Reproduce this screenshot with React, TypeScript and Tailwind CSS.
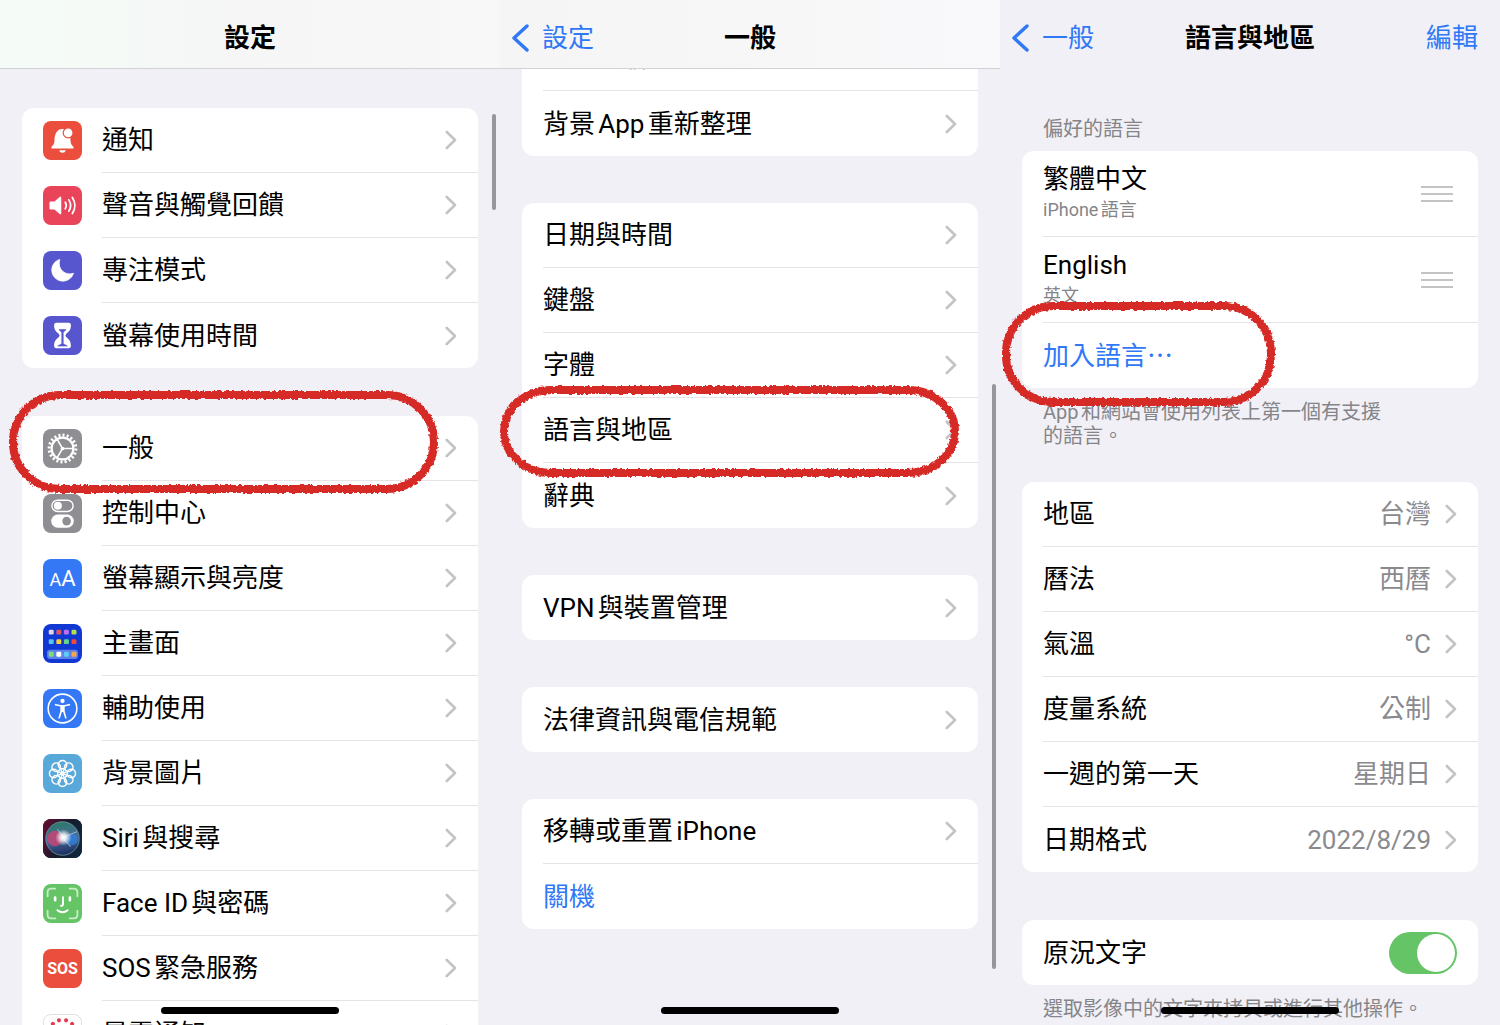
import { useState, ReactNode } from 'react'
import clsx from 'clsx'

interface RowItem {
  title: string
  icon?: ReactNode
  value?: string
  action?: boolean
  ring?: string
}

function Tile({ color, children }: { color: string; children?: ReactNode }) {
  return (
    <svg className={clsx('size-[39px] shrink-0 rounded-lg', color)} viewBox="0 0 38 38" fill="none" stroke="none">
      {children}
    </svg>
  )
}

function TextTile({ color, children }: { color: string; children: ReactNode }) {
  return (
    <span className={clsx('flex size-[39px] shrink-0 items-baseline justify-center rounded-lg text-white', color)}>
      {children}
    </span>
  )
}

const bell = (
  <Tile color="bg-[#eb4e3d]">
    <path d="M9 26.800q-1.300 0-.8-1.300c.4-1 3-2.500 3-6.500 0-6.500 2.500-11.200 7.800-11.200s7.800 4.700 7.800 11.200c0 4 2.600 5.500 3 6.500q.5 1.300-.8 1.300z" fill="#fff" />
    <path d="M15.700 28.500h6.600q-.8 2.500-3.300 2.500t-3.300-2.500z" fill="#fff" />
    <circle cx="24.5" cy="11.6" r="5.4" fill="#eb4e3d" />
    <circle cx="24.5" cy="11.6" r="4.2" fill="#fff" />
  </Tile>
)

const speaker = (
  <Tile color="bg-[#ea445a]">
    <path d="M7.500 15h3.700l5-4.200q1.600-1.200 1.600.8v14.800q0 2-1.600.8l-5-4.200H7.500q-1.200 0-1.200-1.200v-5.600q0-1.200 1.200-1.200z" fill="#fff" />
    <path d="M21.700 15.800q1.900 3.200 0 6.400M25.200 13.500q3.400 5.500 0 11M28.600 11.200q5 7.800 0 15.600" stroke="#fff" strokeWidth="1.7" strokeLinecap="round" />
  </Tile>
)

const moon = (
  <Tile color="bg-[#5756ce]">
    <path d="M16.300 8.200A10.800 10.800 0 1 0 29.700 21.700C22 24.500 13.500 18 16.300 8.200z" fill="#fff" stroke="#fff" strokeWidth=".8" strokeLinejoin="round" />
  </Tile>
)

const hourglass = (
  <Tile color="bg-[#5756ce]">
    <path d="M13 6.600h12q2.200 0 2.200 2.200c0 5-2 6.500-4.700 8.700q-1.300 1.500 0 3c2.700 2.200 4.700 3.700 4.700 8.700q0 2.200-2.200 2.200H13q-2.200 0-2.200-2.200c0-5 2-6.500 4.700-8.700q1.300-1.500 0-3c-2.700-2.200-4.700-3.700-4.700-8.700q0-2.200 2.200-2.200z" fill="#fff" />
    <path d="M15.500 13.200h7L19.700 16v11l4 2.300h-9.400l4-2.300V16z" fill="#5756ce" stroke="#5756ce" strokeWidth=".6" strokeLinejoin="round" />
  </Tile>
)

const gear = (
  <Tile color="bg-[#8e8e93]">
    <g stroke="#fff">
      <circle cx="19" cy="19" r="13" strokeWidth="3" pathLength="40" strokeDasharray="1 1" />
      <circle cx="19" cy="19" r="10.6" strokeWidth="2.2" />
      <path d="M19 19h10.500M19 19l-5.300-9.200M19 19l-5.300 9.200" strokeWidth="1.5" />
    </g>
    <circle cx="19" cy="19" r="1.8" fill="#fff" />
  </Tile>
)

const toggles = (
  <Tile color="bg-[#8e8e93]">
    <rect x="8.7" y="6" width="20.6" height="11" rx="5.5" stroke="#fff" strokeWidth="1.4" />
    <circle cx="14.5" cy="11.5" r="3.9" fill="#fff" />
    <rect x="8" y="20" width="22" height="12.8" rx="6.4" fill="#fff" />
    <circle cx="23" cy="26.4" r="4.2" fill="#8e8e93" />
  </Tile>
)

const appColors = [
  ['#e8d5e4', '#e2575c', '#bf6ff2', '#b5e04c'],
  ['#58c4f5', '#f7cf3a', '#63d68a', '#ef4a37'],
  ['#7fdc76', '#ffffff', '#5ccdf7', '#f7a540'],
]
const appTops = [5.5, 14.8, 27]

const homeScreen = (
  <Tile color="bg-[#1238d3]">
    <rect x="4" y="25" width="30" height="9" rx="2.5" fill="#5f82ea" />
    {appColors.map((line, i) =>
      line.map((c, j) => <rect key={c} x={5.6 + j * 7.4} y={appTops[i]} width="4.8" height="4.8" rx="1.2" fill={c} />)
    )}
  </Tile>
)

const accessibility = (
  <Tile color="bg-[#3478f6]">
    <circle cx="19" cy="19" r="14" stroke="#fff" strokeWidth="1.5" />
    <circle cx="19" cy="11.7" r="2.1" fill="#fff" />
    <path d="M12.300 15.300l4.700 1h4l4.700-1M17.800 17v4.500l-2 6.500M20.200 17v4.500l2 6.500" stroke="#fff" strokeWidth="1.6" strokeLinecap="round" strokeLinejoin="round" />
    <path d="M17.200 16h3.600v6.500h-3.600z" fill="#fff" />
  </Tile>
)

const petals = [0, 45, 90, 135, 180, 225, 270, 315]

const wallpaper = (
  <Tile color="bg-[#59a8da]">
    {petals.map((deg) => (
      <circle key={deg} cx="19" cy="10.4" r="4.1" stroke="#fff" strokeWidth="1.5" transform={`rotate(${deg} 19 19)`} />
    ))}
    {petals.map((deg) => (
      <path key={deg} d="M19 18V14.500" stroke="#fff" strokeWidth="1.3" transform={`rotate(${deg + 22.5} 19 19)`} />
    ))}
    <circle cx="19" cy="19" r="2.2" fill="#fff" />
  </Tile>
)

const siri = (
  <Tile color="bg-[#111a2a]">
    <defs>
      <linearGradient id="siriBack" x1="0" y1="0.3" x2="1" y2="0.7">
        <stop offset="0" stopColor="#5a1030" />
        <stop offset=".5" stopColor="#151c2c" />
        <stop offset="1" stopColor="#10283f" />
      </linearGradient>
      <linearGradient id="siriOrb" x1="0.4" y1="0" x2="0.6" y2="1">
        <stop offset="0" stopColor="#2c7a68" />
        <stop offset=".5" stopColor="#4a6a9c" />
        <stop offset="1" stopColor="#182a5c" />
      </linearGradient>
      <radialGradient id="siriGlow">
        <stop offset="0" stopColor="#fff" />
        <stop offset=".35" stopColor="#fff" stopOpacity=".85" />
        <stop offset="1" stopColor="#fff" stopOpacity="0" />
      </radialGradient>
    </defs>
    <rect width="38" height="38" fill="url(#siriBack)" />
    <circle cx="19" cy="19" r="16.3" fill="url(#siriOrb)" stroke="#6d9aa0" strokeWidth=".8" />
    <circle cx="11.5" cy="19" r="7.5" fill="#cc4272" fillOpacity=".8" />
    <circle cx="28.5" cy="20" r="5.5" fill="#2f7fdc" fillOpacity=".8" />
    <path d="M19 18l14-5.500M19 18l8 9M14 10l6 8" stroke="#bfe4ef" strokeOpacity=".6" />
    <circle cx="20" cy="18" r="8" fill="url(#siriGlow)" />
  </Tile>
)

const faceId = (
  <Tile color="bg-[#65c466]">
    <path d="M4.500 12V8q0-3.500 3.500-3.500h4M26 4.500h4q3.500 0 3.500 3.500v4M33.500 26v4q0 3.500-3.500 3.500h-4M12 33.500H8q-3.500 0-3.500-3.500v-4" stroke="#c9ebc8" strokeWidth="1.8" strokeLinecap="round" />
    <path d="M11.800 13.200v2.600M26.200 13.200v2.600" stroke="#fff" strokeWidth="2.6" strokeLinecap="round" />
    <path d="M19.500 13v6.500q0 1.800-2 1.800M14 25.500q5 4 10 0" stroke="#fff" strokeWidth="1.9" strokeLinecap="round" />
  </Tile>
)

const exposure = (
  <Tile color="border border-[#e0e0e3] bg-white">
    {Array.from({ length: 12 }, (_, i) => (
      <circle key={i} cx="19" cy="5" r="2.1" fill="#e23b50" transform={`rotate(${i * 30 + 15} 19 19)`} />
    ))}
  </Tile>
)

const settings: RowItem[][] = [
  [
    { title: '通知', icon: bell },
    { title: '聲音與觸覺回饋', icon: speaker },
    { title: '專注模式', icon: moon },
    { title: '螢幕使用時間', icon: hourglass },
  ],
  [
    { title: '一般', icon: gear, ring: '-left-[9px] right-[44px] -top-[21px] -bottom-2' },
    { title: '控制中心', icon: toggles },
    {
      title: '螢幕顯示與亮度',
      icon: (
        <TextTile color="bg-[#3478f6]">
          <span className="text-lg leading-[39px]">A</span>
          <span className="text-[22px] leading-[39px]">A</span>
        </TextTile>
      ),
    },
    { title: '主畫面', icon: homeScreen },
    { title: '輔助使用', icon: accessibility },
    { title: '背景圖片', icon: wallpaper },
    { title: 'Siri與搜尋', icon: siri },
    { title: 'Face ID與密碼', icon: faceId },
    {
      title: 'SOS緊急服務',
      icon: (
        <TextTile color="bg-[#eb4e3d]">
          <span className="text-base leading-[39px] font-bold">SOS</span>
        </TextTile>
      ),
    },
    { title: '暴露通知', icon: exposure },
  ],
]

const general: RowItem[][] = [
  [{ title: 'iPhone儲存空間' }, { title: '背景App重新整理' }],
  [
    { title: '日期與時間' },
    { title: '鍵盤' },
    { title: '字體' },
    { title: '語言與地區', ring: '-left-[18px] right-[23px] -top-2 -bottom-[10px]' },
    { title: '辭典' },
  ],
  [{ title: 'VPN與裝置管理' }],
  [{ title: '法律資訊與電信規範' }],
  [{ title: '移轉或重置iPhone' }, { title: '關機', action: true }],
]

const region: RowItem[] = [
  { title: '地區', value: '台灣' },
  { title: '曆法', value: '西曆' },
  { title: '氣溫', value: '°C' },
  { title: '度量系統', value: '公制' },
  { title: '一週的第一天', value: '星期日' },
  { title: '日期格式', value: '2022/8/29' },
]

const languages = [
  { name: '繁體中文', note: 'iPhone語言' },
  { name: 'English', note: '英文' },
]

function Chevron() {
  return (
    <svg className="h-5 w-3 shrink-0" viewBox="0 0 12 20" fill="none">
      <path d="M1.800 2l8.200 8-8.200 8" stroke="#c4c4c7" strokeWidth="2.6" strokeLinecap="round" strokeLinejoin="round" />
    </svg>
  )
}

// hand-drawn marker loop around a row
function Ring({ place }: { place: string }) {
  return (
    <div className={clsx('pointer-events-none absolute z-10', place)}>
      <svg className="size-full overflow-visible" filter="url(#marker)">
        <rect width="100%" height="100%" rx="47" fill="none" stroke="#d62b26" strokeWidth="8" />
      </svg>
    </div>
  )
}

function Card({ children }: { children: ReactNode }) {
  return <ul className="rounded-xl bg-white">{children}</ul>
}

const line = 'flex-1 border-[#e4e4e6] group-not-last:border-b'

function Row({ item }: { item: RowItem }) {
  return (
    <li className="group relative">
      {item.action ? (
        <div className="flex h-[65px] pl-[21px]">
          <button className="flex-1 text-left text-[#2f78f6]">{item.title}</button>
        </div>
      ) : (
        <a href="#" className="flex h-[65px] items-center gap-5 pl-[21px]">
          {item.icon}
          <span className={clsx('flex h-full items-center gap-[14px] pr-[21px]', line)}>
            <span className="flex-1">{item.title}</span>
            {item.value && <span className="text-[#8a8a8e]">{item.value}</span>}
            <Chevron />
          </span>
        </a>
      )}
      {item.ring && <Ring place={item.ring} />}
    </li>
  )
}

function Header({ title, back, edit, bar }: { title: string; back?: string; edit?: boolean; bar: string }) {
  return (
    <header className={clsx('relative z-10 grid h-[69px] shrink-0 grid-cols-[1fr_auto_1fr] items-center border-b px-[11px] pt-2', bar)}>
      <div>
        {back && (
          <a href="#" className="flex items-center gap-3 text-[#2f78f6]">
            <svg className="h-7 w-[19px]" viewBox="0 0 19 28" fill="none">
              <path d="M16 2L3 14l13 12" stroke="currentColor" strokeWidth="3.4" strokeLinecap="round" strokeLinejoin="round" />
            </svg>
            {back}
          </a>
        )}
      </div>
      <h1 className="font-semibold">{title}</h1>
      <div className="pr-[11px] text-right">{edit && <button className="text-[#2f78f6]">編輯</button>}</div>
    </header>
  )
}

function Screen({ children }: { children: ReactNode }) {
  return (
    <section className="relative flex flex-col overflow-hidden">
      {children}
      <div className="absolute bottom-[11px] left-1/2 z-20 h-[7px] w-[178px] -translate-x-1/2 rounded-full bg-black" />
    </section>
  )
}

export default function App() {
  const [liveText, setLiveText] = useState(true)

  return (
    <div className="grid h-screen grid-cols-3 overflow-hidden bg-[#f1f0f6] font-[Roboto,'Noto_Sans_CJK_TC',sans-serif] text-[26px] leading-8 text-black [text-autospace:normal]">
      <svg className="absolute size-0">
        <filter id="marker" x="-10%" y="-20%" width="120%" height="140%">
          <feTurbulence type="fractalNoise" baseFrequency="0.35" numOctaves="2" seed="4" result="grain" />
          <feDisplacementMap in="SourceGraphic" in2="grain" scale="4" xChannelSelector="R" yChannelSelector="G" />
        </filter>
      </svg>

      <Screen>
        <Header title="設定" bar="border-[#d3d3d6] bg-linear-to-r from-[#f5fcf8] via-[#f5f6f5] to-[#f8f8f8]" />
        <main className="flex flex-col gap-12 px-[22px] pt-[39px]">
          {settings.map((group) => (
            <Card key={group[0].title}>
              {group.map((item) => <Row key={item.title} item={item} />)}
            </Card>
          ))}
        </main>
        <div className="absolute top-[114px] right-1 h-24 w-1 rounded-full bg-[#96969b]" />
      </Screen>

      <Screen>
        <Header title="一般" back="設定" bar="border-[#d3d3d6] bg-linear-to-r from-[#f5f5f5] to-[#f9f9fb]" />
        <main className="-mt-[43px] flex flex-col gap-[47px] px-[22px]">
          {general.map((group) => (
            <Card key={group[0].title}>
              {group.map((item) => <Row key={item.title} item={item} />)}
            </Card>
          ))}
        </main>
        <div className="absolute top-[384px] right-1 bottom-14 w-1 rounded-full bg-[#96969b]" />
      </Screen>

      <Screen>
        <Header title="語言與地區" back="一般" edit bar="border-transparent" />
        <main className="px-[22px] pt-12">
          <h2 className="px-[21px] pb-[10px] text-xl leading-6 text-[#858589]">偏好的語言</h2>
          <Card>
            {languages.map((lang) => (
              <li key={lang.name} className="group pl-[21px]">
                <div className={clsx('flex h-[86px] items-center pr-[25px]', line)}>
                  <div className="flex-1">
                    <p>{lang.name}</p>
                    <p className="text-lg leading-[30px] text-[#858589]">{lang.note}</p>
                  </div>
                  <button aria-label="重新排序" className="flex flex-col gap-[5px]">
                    <span className="h-0.5 w-8 bg-[#c4c4c7]" />
                    <span className="h-0.5 w-8 bg-[#c4c4c7]" />
                    <span className="h-0.5 w-8 bg-[#c4c4c7]" />
                  </button>
                </div>
              </li>
            ))}
            <Row item={{ title: '加入語言⋯', action: true, ring: '-left-4 right-[207px] -top-[17px] -bottom-[14px]' }} />
          </Card>
          <p className="pt-3 pr-20 pb-[34px] pl-[21px] text-xl leading-6 text-[#858589]">App和網站會使用列表上第一個有支援的語言。</p>
          <Card>
            {region.map((item) => <Row key={item.title} item={item} />)}
          </Card>
          <div className="mt-12 flex h-[65px] items-center rounded-xl bg-white px-[21px]">
            <label htmlFor="live-text" className="flex-1">原況文字</label>
            <input
              id="live-text"
              type="checkbox"
              checked={liveText}
              onChange={() => setLiveText(!liveText)}
              className="h-[42px] w-[68px] appearance-none rounded-full bg-[#e9e9eb] p-[2px] before:block before:size-[38px] before:rounded-full before:bg-white checked:bg-[#65c466] checked:before:translate-x-[26px]"
            />
          </div>
          <p className="px-[21px] pt-3 text-xl leading-6 text-[#858589]">選取影像中的文字來拷貝或進行其他操作。</p>
        </main>
      </Screen>
    </div>
  )
}
